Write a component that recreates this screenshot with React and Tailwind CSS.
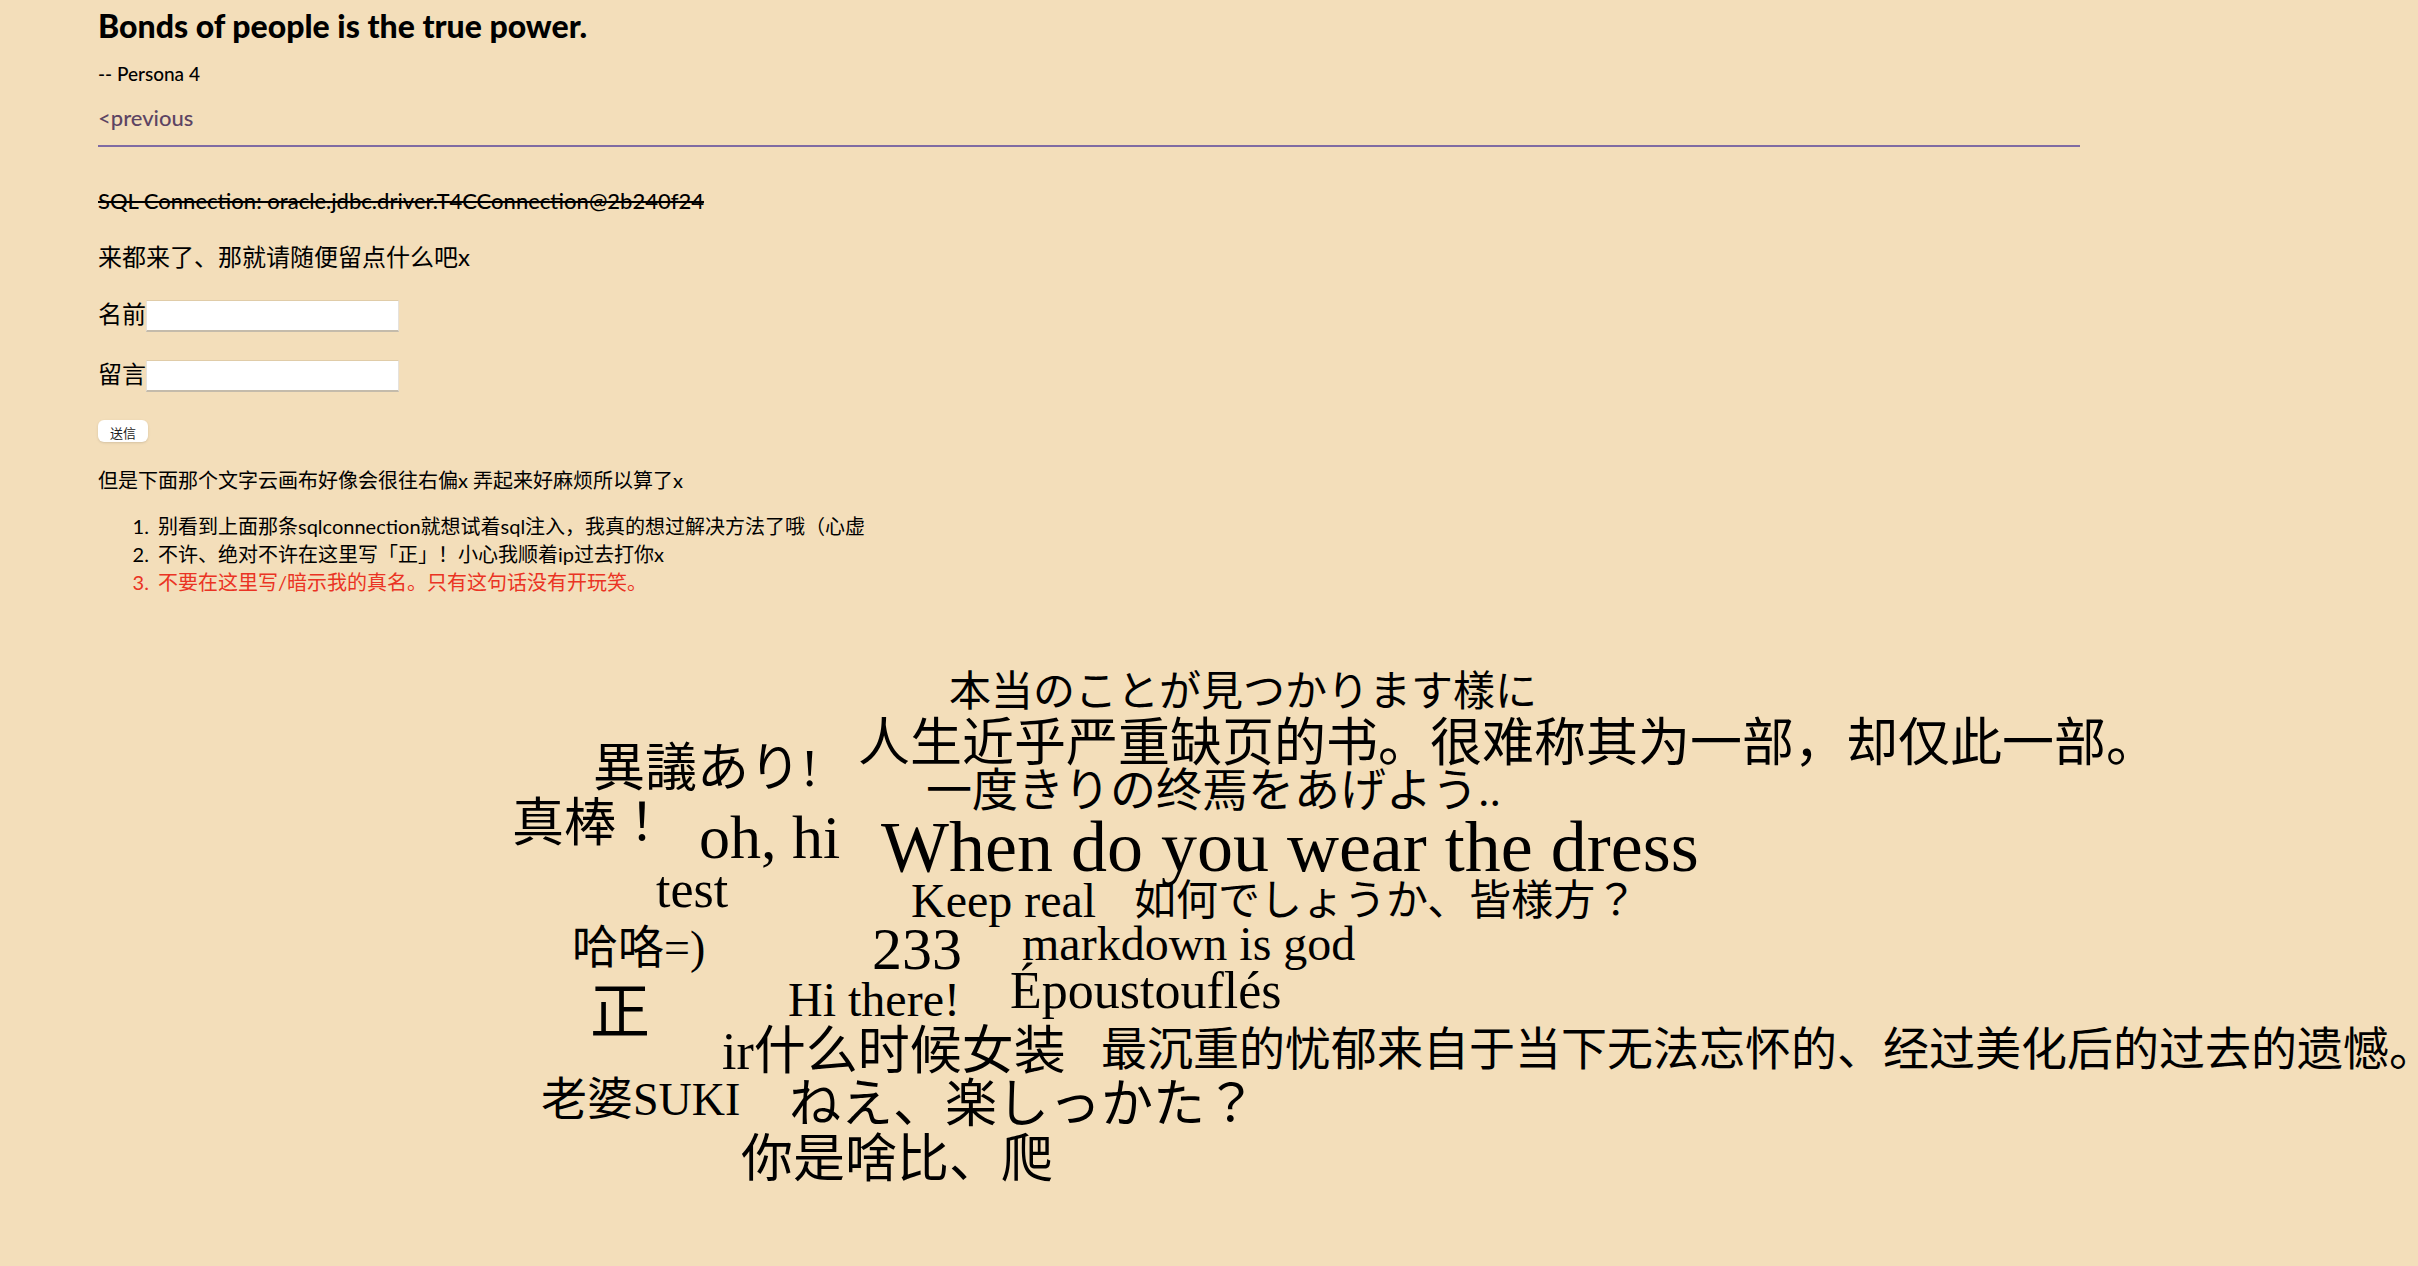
const rules = [
  { text: "别看到上面那条sqlconnection就想试着sql注入，我真的想过解决方法了哦（心虚", tone: "text-black" },
  { text: "不许、绝对不许在这里写「正」！小心我顺着ip过去打你x", tone: "text-black" },
  { text: "不要在这里写/暗示我的真名。只有这句话没有开玩笑。", tone: "text-[#ea3323]" },
];

const zh = "font-['Liberation_Serif','Noto_Sans_CJK_SC',serif]";
const ja = "font-['Liberation_Serif','Noto_Sans_CJK_JP',serif]";

const words = [
  { text: "本当のことが見つかります樣に", font: ja, place: "left-[949px] top-[22px] text-[42px]" },
  { text: "人生近乎严重缺页的书。很难称其为一部，却仅此一部。", font: zh, place: "left-[858px] top-[74px] text-[52px]" },
  { text: "異議あり!", font: ja, place: "left-[593px] top-[99px] text-[52px]" },
  { text: "一度きりの终焉をあげよう..", font: ja, place: "left-[926px] top-[121px] text-[46px]" },
  { text: "真棒！", font: ja, place: "left-[512px] top-[154px] text-[52px]" },
  { text: "oh, hi", font: zh, place: "left-[699px] top-[167px] text-[62px]" },
  { text: "When do you wear the dress", font: zh, place: "left-[881px] top-[177px] text-[72px]" },
  { text: "test", font: zh, place: "left-[656px] top-[220px] text-[52px]" },
  { text: "Keep real", font: zh, place: "left-[911px] top-[231px] text-[48px]" },
  { text: "如何でしょうか、皆様方？", font: ja, place: "left-[1134px] top-[231px] text-[42px]" },
  { text: "哈咯=)", font: zh, place: "left-[572px] top-[278px] text-[46px]" },
  { text: "233", font: zh, place: "left-[872px] top-[279px] text-[60px]" },
  { text: "markdown is god", font: zh, place: "left-[1022px] top-[274px] text-[48px]" },
  { text: "Époustouflés", font: zh, place: "left-[1010px] top-[321px] text-[52px]" },
  { text: "Hi there!", font: zh, place: "left-[788px] top-[330px] text-[48px]" },
  { text: "正", font: zh, place: "left-[590px] top-[343px] text-[60px]" },
  { text: "ir什么时候女装", font: zh, place: "left-[722px] top-[382px] text-[52px]" },
  { text: "最沉重的忧郁来自于当下无法忘怀的、经过美化后的过去的遗憾。", font: zh, place: "left-[1101px] top-[380px] text-[46px]" },
  { text: "老婆SUKI", font: zh, place: "left-[541px] top-[430px] text-[46px]" },
  { text: "ねえ、楽しっかた？", font: ja, place: "left-[789px] top-[435px] text-[52px]" },
  { text: "你是啥比、爬", font: zh, place: "left-[741px] top-[490px] text-[52px]" },
];

function Field({ id, label }) {
  return (
    <div className="mt-7 flex items-start">
      <label htmlFor={id} className="leading-7">{label}</label>
      <input
        id={id}
        type="text"
        className="h-8 w-[253px] border border-t-[#e0cca8] border-r-[#e6e2dc] border-b-2 border-b-[#c4bbab] border-l-[#e6e2dc] bg-white px-1 text-xl outline-none"
      />
    </div>
  );
}

export default function App() {
  return (
    <div className="min-h-screen overflow-x-hidden bg-[#f3deba] font-['Lato','Noto_Sans_CJK_SC',sans-serif] text-2xl text-black">
      <main className="mr-[338px] ml-[98px] pt-2">
        <h1 className="text-[32px] leading-9 font-black">Bonds of people is the true power.</h1>
        <p className="mt-4 text-[19px] leading-7 font-medium">-- Persona 4</p>
        <p className="mt-[14px] text-[22px] leading-8 font-medium">
          <a href="#previous" className="text-[#5c4463]">&lt;previous</a>
        </p>
        <hr className="mt-[11px] border-t-2 border-[#7f6ba3]" />
        <p className="mt-[38px] text-[22px] leading-8 font-medium line-through">
          SQL Connection: oracle.jdbc.driver.T4CConnection@2b240f24
        </p>
        <p className="mt-6 leading-8">来都来了、那就请随便留点什么吧x</p>
        <form className="-mt-px" onSubmit={(event) => event.preventDefault()}>
          <Field id="name" label="名前" />
          <Field id="message" label="留言" />
          <button
            type="submit"
            className="mt-7 block h-[22px] w-[50px] rounded-md bg-white pt-1 text-[13px] leading-[18px] text-[#222] shadow"
          >
            送信
          </button>
        </form>
        <p className="mt-6 text-xl leading-7">但是下面那个文字云画布好像会很往右偏x 弄起来好麻烦所以算了x</p>
        <ol className="mt-[18px] list-decimal pl-14 text-xl leading-7">
          {rules.map((rule) => (
            <li key={rule.text} className={`pl-1 ${rule.tone}`}>{rule.text}</li>
          ))}
        </ol>
      </main>
      <section aria-label="文字云" className="relative mt-11 h-[600px] whitespace-nowrap">
        {words.map((word) => (
          <span key={word.text} className={`absolute leading-[60px] ${word.font} ${word.place}`}>
            {word.text}
          </span>
        ))}
      </section>
    </div>
  );
}
